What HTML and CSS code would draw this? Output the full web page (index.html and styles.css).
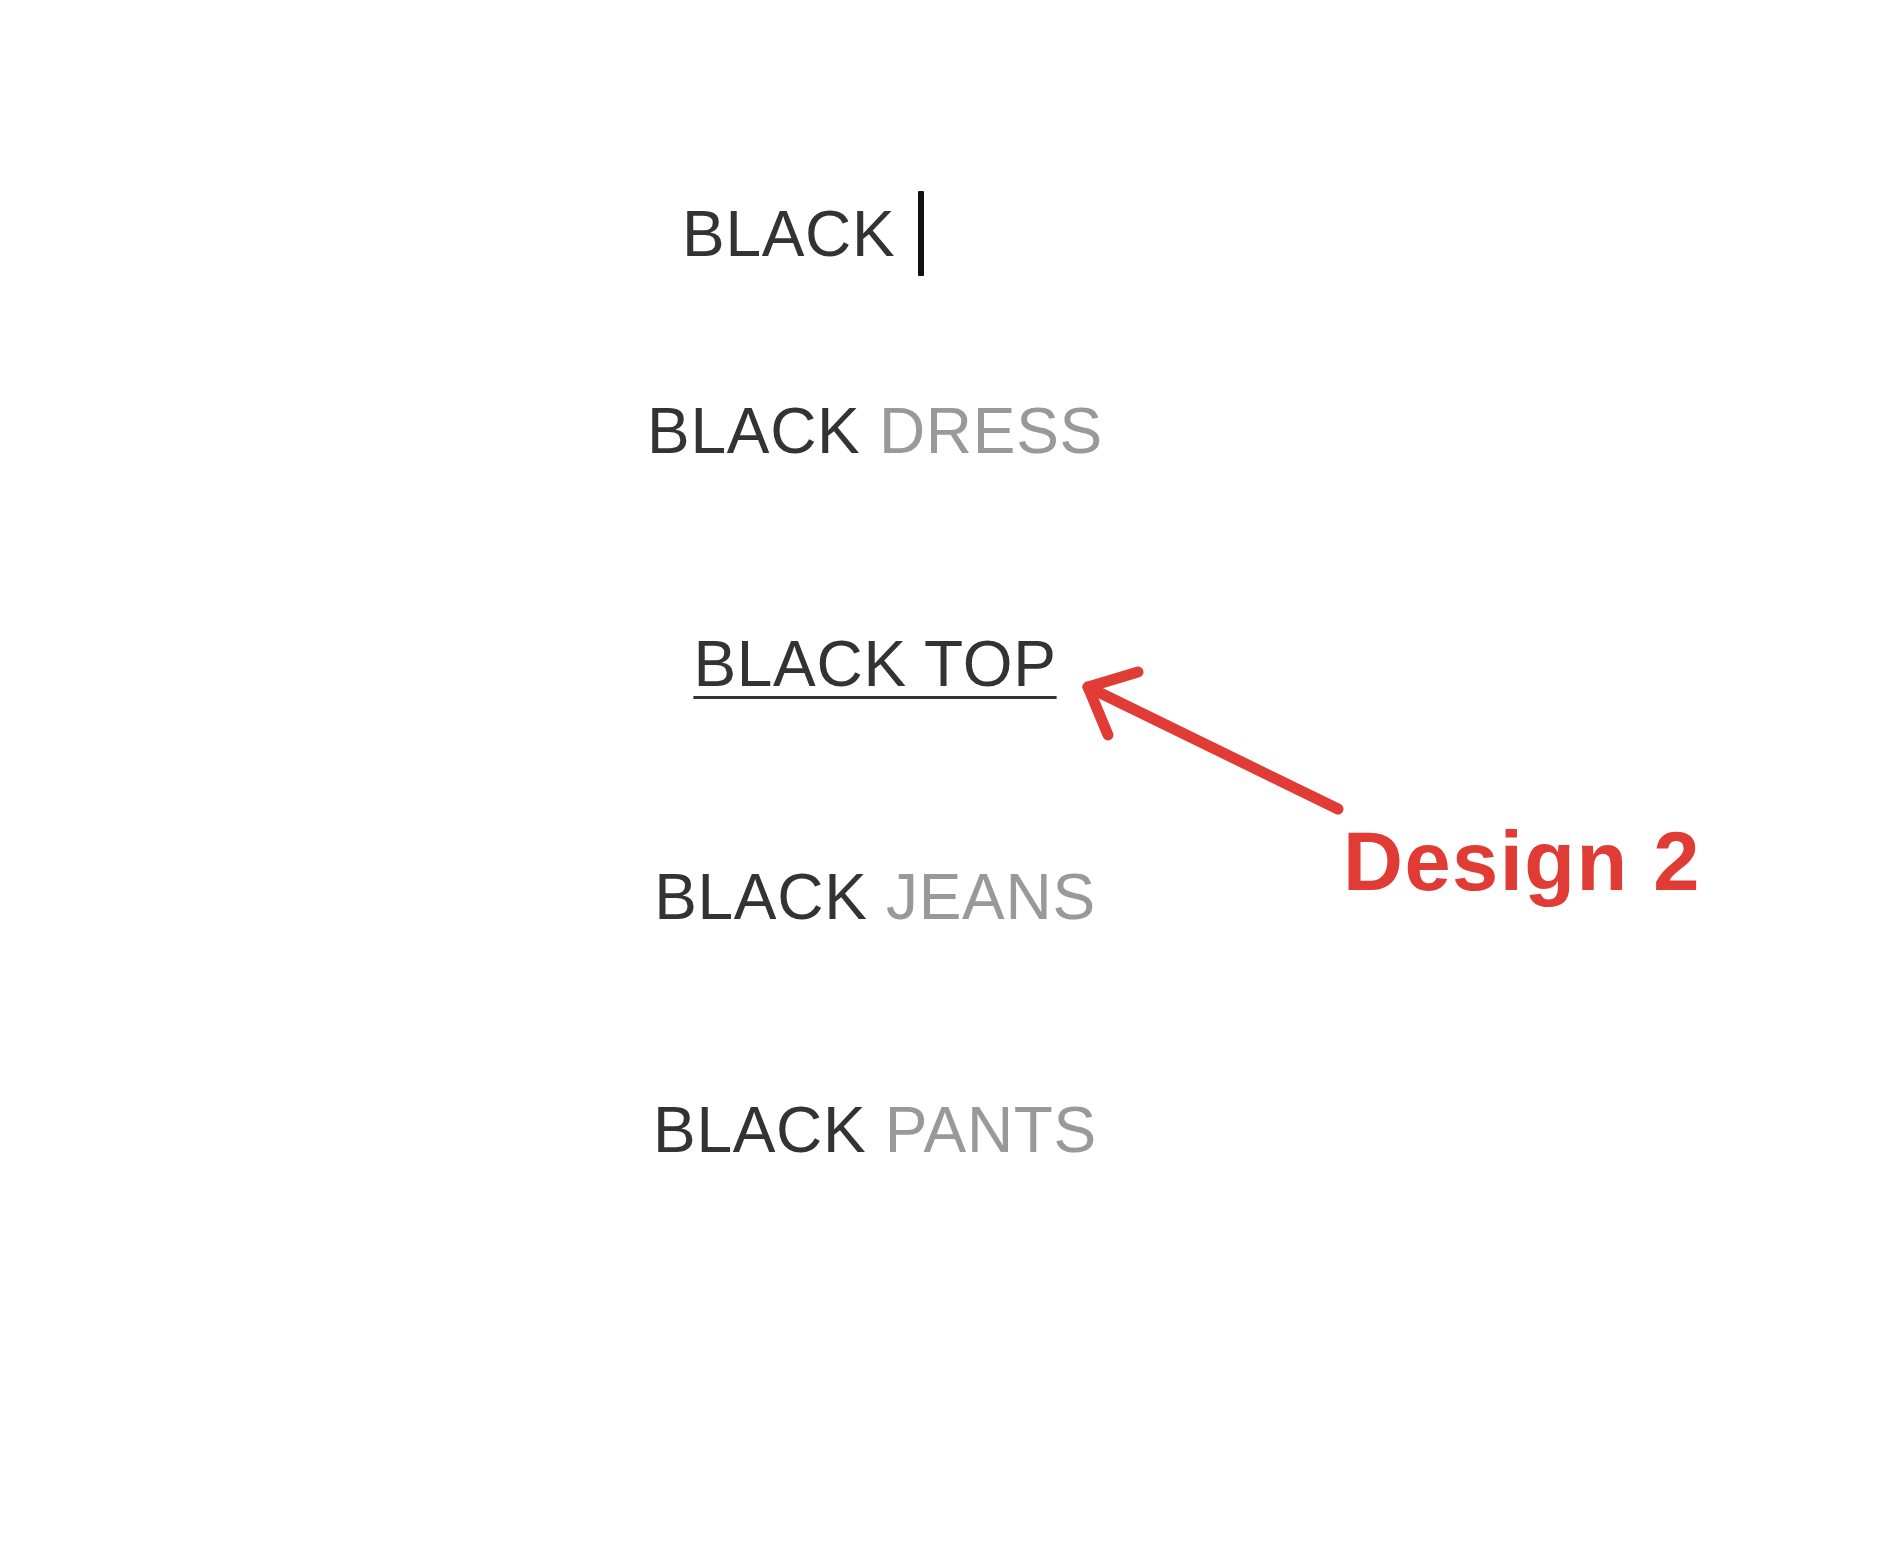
FILE: index.html
```html
<!DOCTYPE html>
<html lang="en">
<head>
  <meta charset="UTF-8">
  <meta name="viewport" content="width=device-width, initial-scale=1.0">
  <title>Search suggestions: Design 2</title>
  <link rel="stylesheet" href="styles.css">
</head>
<body>
  <div class="page">
    <div class="search">
      <span class="query">BLACK</span>
      <span class="caret"></span>
    </div>
    <ul class="suggestions">
      <li>BLACK <span class="rest">DRESS</span></li>
      <li class="active">BLACK TOP</li>
      <li>BLACK <span class="rest">JEANS</span></li>
      <li>BLACK <span class="rest">PANTS</span></li>
    </ul>
  </div>

  <svg class="arrow" width="1894" height="1552" viewBox="0 0 1894 1552">
    <g fill="none" stroke="#e03b34" stroke-width="11" stroke-linecap="round" stroke-linejoin="round">
      <path d="M1338 809 L1088 687"/>
      <path d="M1138 672 L1088 687 L1108 735"/>
    </g>
  </svg>
  <div class="label">Design 2</div>
</body>
</html>
```

FILE: styles.css
```css
body {
  margin: 0;
  background: #fff;
  font-family: "Liberation Sans", Arial, sans-serif;
  color: #333;
}
.page {
  width: 800px;
  margin-left: 475px;
  padding-top: 191px;
}
.search {
  display: flex;
  align-items: center;
  height: 85px;
  padding-left: 207px;
  font-size: 64px;
  line-height: 64px;
  letter-spacing: 0.7px;
}
.caret {
  width: 6px;
  height: 85px;
  margin-left: 23px;
  background: #111;
  border-radius: 1px;
}
.suggestions {
  list-style: none;
  margin: 123px 0 0;
  padding: 0;
  display: flex;
  flex-direction: column;
  gap: 169px;
  text-align: center;
  font-size: 64px;
  line-height: 64px;
  letter-spacing: 0.7px;
}
.suggestions .rest {
  color: #999;
}
.suggestions .active {
  text-decoration: underline;
  text-decoration-thickness: 3px;
  text-underline-offset: 10px;
}
.arrow {
  position: absolute;
  left: 0;
  top: 0;
  pointer-events: none;
}
.label {
  position: absolute;
  left: 1343px;
  top: 821px;
  font-weight: 700;
  font-size: 83px;
  line-height: 82px;
  letter-spacing: 1.5px;
  color: #e03b34;
}
```
